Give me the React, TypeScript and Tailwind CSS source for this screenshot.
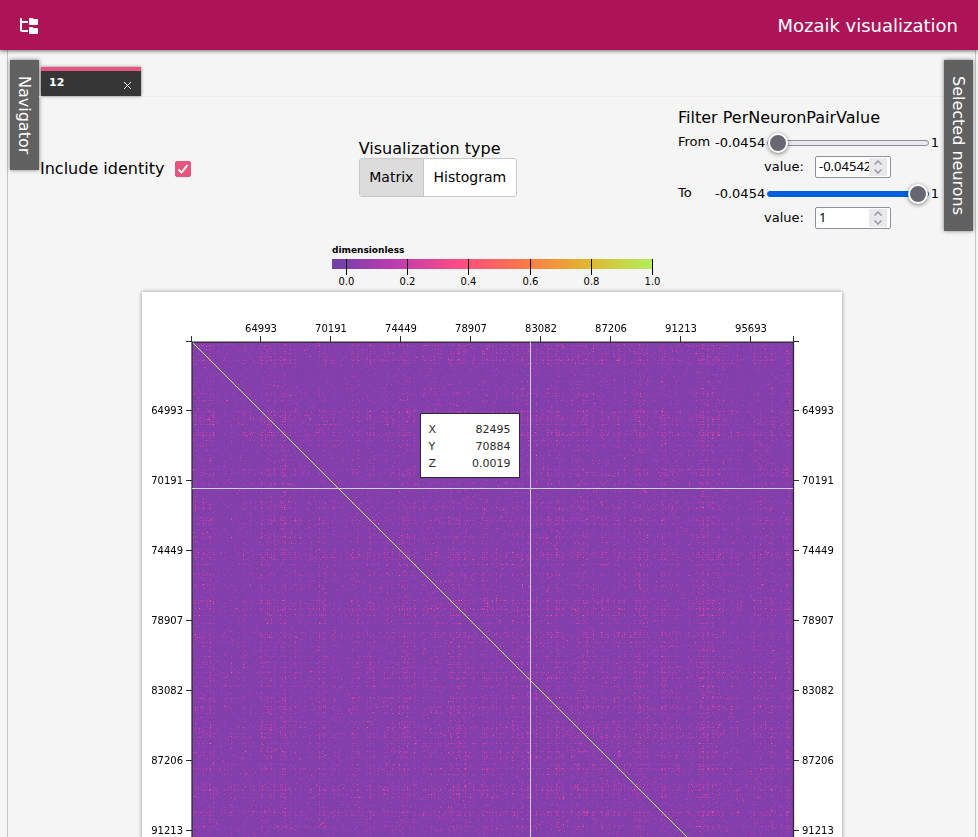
import { useEffect, useRef, useState } from "react";
import type { ChangeEvent } from "react";
import { FaFolderTree } from "react-icons/fa6";

const SIZE = 601;
const MIN = -0.0454;

const STOPS = [
  [110, 64, 170],
  [191, 60, 175],
  [254, 75, 131],
  [255, 120, 71],
  [226, 183, 47],
  [175, 240, 91],
];

function warm(t: number) {
  const p = Math.min(Math.max(t, 0), 0.9999) * 5;
  const i = Math.floor(p);
  const f = p - i;
  return STOPS[i].map((c, k) => Math.round(c + (STOPS[i + 1][k] - c) * f));
}

function generator(seed: number) {
  let a = seed;
  return () => {
    a = (a + 0x6d2b79f5) | 0;
    let t = Math.imul(a ^ (a >>> 15), 1 | a);
    t = (t + Math.imul(t ^ (t >>> 7), 61 | t)) ^ t;
    return ((t ^ (t >>> 14)) >>> 0) / 4294967296;
  };
}

function Heatmap() {
  const ref = useRef<HTMLCanvasElement>(null);

  useEffect(() => {
    const ctx = ref.current?.getContext("2d");
    if (!ctx) return;
    const rand = generator(12);
    const weights = Array.from({ length: SIZE }, () => {
      const r = rand();
      return 0.1 + r * r * r * r * 4.2;
    });
    const image = ctx.createImageData(SIZE, SIZE);
    for (let y = 0; y < SIZE; y++) {
      for (let x = 0; x < SIZE; x++) {
        const w = weights[x] * weights[y];
        let z = 0.008 + (rand() - 0.5) * 0.04;
        if (rand() < w * 0.11 + 0.008) z += 0.05 + rand() * 0.15;
        if (rand() < w * 0.007 + 0.001) z += 0.15 + rand() * 0.2;
        if (x === y) z = 1;
        const [r, g, b] = warm((z - MIN) / (1 - MIN));
        const o = (y * SIZE + x) * 4;
        image.data[o] = r;
        image.data[o + 1] = g;
        image.data[o + 2] = b;
        image.data[o + 3] = 255;
      }
    }
    ctx.putImageData(image, 0, 0);
  }, []);

  return <canvas ref={ref} width={SIZE} height={SIZE} className="block" />;
}

const TICKS = ["64993", "70191", "74449", "78907", "83082", "87206", "91213", "95693"];

function Axes() {
  return (
    <svg width="701" height="701" viewBox="0 0 701 701" className="absolute left-0 top-0 text-[10px]">
      <path d="M50 50H651M50 651H651M50 50V651M651.500 50V651" stroke="#2b2b2b" strokeWidth="1.250" />
      <g stroke="#2b2b2b" strokeWidth="1" shapeRendering="crispEdges">
        <path d="M44 49.500H50M44 651.500H50M651 49.500H657M651 651.500H657M49.500 44V50M49.500 651V657M651.500 44V50M651.500 651V657" />
        {TICKS.map((t, i) => {
          const p = 118.5 + i * 70;
          return <path key={t} d={`M${p} 44V50M${p} 651V657M44 ${p}H50M651 ${p}H657`} />;
        })}
      </g>
      <path d="M388.500 50V651M50 196.500H651" stroke="#d0d0d0" shapeRendering="crispEdges" />
      <g fill="#000">
        {TICKS.map((t, i) => {
          const p = 119 + i * 70;
          return (
            <g key={t}>
              <text x={p} y="40" textAnchor="middle">{t}</text>
              <text x="41" y={p + 3} textAnchor="end">{t}</text>
              <text x="660" y={p + 3}>{t}</text>
            </g>
          );
        })}
      </g>
    </svg>
  );
}

function ColorScale() {
  return (
    <svg width="340" height="44" viewBox="0 0 340 44" className="mt-[2px] text-[10px]" shapeRendering="crispEdges">
      <defs>
        <linearGradient id="warm">
          {STOPS.map((c, i) => (
            <stop key={i} offset={i / 5} stopColor={`rgb(${c.join(",")})`} />
          ))}
        </linearGradient>
      </defs>
      <text x="10" y="11" fontWeight="bold" className="text-[9px]">dimensionless</text>
      <rect x="10" y="17" width="320" height="10" fill="url(#warm)" />
      {["0.0", "0.2", "0.4", "0.6", "0.8", "1.0"].map((t, i) => {
        const x = Math.round(24 + i * 61.2);
        return (
          <g key={t}>
            <path d={`M${x + 0.5} 17V33`} stroke="#000" />
            <text x={x + 0.5} y="43" textAnchor="middle">{t}</text>
          </g>
        );
      })}
    </svg>
  );
}

function Tooltip() {
  const rows = [
    ["X", "82495"],
    ["Y", "70884"],
    ["Z", "0.0019"],
  ];
  return (
    <dl className="absolute left-[278px] top-[121px] w-[100px] border border-[#2b2b2b] bg-white px-2 pt-[7px] pb-[5px] text-[11px] leading-[17px] text-[#2b2b2b]">
      {rows.map(([k, v]) => (
        <div key={k} className="flex justify-between">
          <dt>{k}</dt>
          <dd>{v}</dd>
        </div>
      ))}
    </dl>
  );
}

const SLIDER =
  "h-5 w-[162px] appearance-none bg-transparent " +
  "[&::-webkit-slider-thumb]:mt-[-8px] [&::-webkit-slider-thumb]:size-5 [&::-webkit-slider-thumb]:appearance-none [&::-webkit-slider-thumb]:rounded-full [&::-webkit-slider-thumb]:border-2 [&::-webkit-slider-thumb]:border-white [&::-webkit-slider-thumb]:bg-[#676774] [&::-webkit-slider-thumb]:shadow-[0_1px_4px_#00000080] " +
  "[&::-webkit-slider-runnable-track]:h-[6px] [&::-webkit-slider-runnable-track]:rounded-full [&::-webkit-slider-runnable-track]:border ";

function RangeRow({ name, initial, filled }: { name: string; initial: string; filled?: boolean }) {
  const [value, setValue] = useState(initial);
  const change = (e: ChangeEvent<HTMLInputElement>) => setValue(e.target.value);
  const step = (d: number) => setValue((v) => String(Math.min(1, Math.max(MIN, Number(v) + d))));
  const id = name.toLowerCase();
  const track = filled
    ? "[&::-webkit-slider-runnable-track]:border-[#0060df] [&::-webkit-slider-runnable-track]:bg-[#0060df]"
    : "[&::-webkit-slider-runnable-track]:border-[#8f8f9d] [&::-webkit-slider-runnable-track]:bg-[#e9e9ed]";
  return (
    <div className="flex h-[51px] text-[13px]">
      <label htmlFor={id} className="w-[37px] leading-[24px]">{name}</label>
      <div className="flex-1">
        <div className="flex h-[26px] items-center justify-between">
          <span>-0.0454</span>
          <input id={id} type="range" min={MIN} max="1" step="any" value={value} onChange={change} className={SLIDER + track} />
          <span>1</span>
        </div>
        <div className="flex items-center pl-[49px]">
          <label htmlFor={`${id}-value`} className="w-[51px]">value:</label>
          <div className="flex h-[22px] w-[76px] items-center rounded-xs border border-[#8f8f9d] bg-white px-[3px]">
            <input
              id={`${id}-value`}
              type="text"
              inputMode="decimal"
              value={value}
              onChange={change}
              className="w-[50px] font-['Noto_Sans','Open_Sans',sans-serif] text-[13px] outline-none"
            />
            <span className="flex h-[18px] w-[18px] flex-col bg-[#e9e9ed]">
              <button type="button" aria-label={`Increase ${name}`} onClick={() => step(0.01)} className="flex h-[9px] items-center justify-center">
                <svg width="8" height="5" viewBox="0 0 8 5" fill="none" stroke="#9a9aa4" strokeWidth="1.500"><path d="M0.500 4.500 4 1l3.500 3.500" /></svg>
              </button>
              <button type="button" aria-label={`Decrease ${name}`} onClick={() => step(-0.01)} className="flex h-[9px] items-center justify-center">
                <svg width="8" height="5" viewBox="0 0 8 5" fill="none" stroke="#9a9aa4" strokeWidth="1.500"><path d="M0.500 0.500 4 4l3.500-3.500" /></svg>
              </button>
            </span>
          </div>
        </div>
      </div>
    </div>
  );
}

function Rail({ label }: { label: string }) {
  return (
    <button
      type="button"
      className="mt-[10px] w-[29px] shrink-0 self-start bg-[#616161] py-4 text-[16px] text-white shadow-[0_0_4px_#00000080]"
    >
      <span className="block leading-[29px] [writing-mode:vertical-rl]">{label}</span>
    </button>
  );
}

export default function App() {
  const [view, setView] = useState("Matrix");
  const [identity, setIdentity] = useState(true);
  return (
    <div className="flex h-screen flex-col overflow-hidden bg-[#f5f5f5] font-['DejaVu_Sans',Verdana,sans-serif] text-black">
      <header className="relative z-10 flex h-[50px] shrink-0 items-center justify-between bg-[#ad1457] px-5 text-white shadow-[0_1px_4px_#00000090]">
        <button type="button" aria-label="Toggle navigator" className="pt-[2px]">
          <FaFolderTree className="h-4 w-[18px]" />
        </button>
        <h1 className="text-[18px]">Mozaik visualization</h1>
      </header>

      <div className="ml-[7px] mr-[2px] flex min-h-0 flex-1 border-x border-[#c4c4c4] px-[2px]">
        <Rail label="Navigator" />
        <main className="min-w-0 flex-1 pt-[17px]">
          <nav className="flex border-b border-[#eeeeee] pl-[2px]">
            <div className="flex h-[29px] w-[100px] items-center justify-between border-t-4 border-[#e75480] bg-[#363636] px-2 text-[11px] text-white shadow-[0_0_3px_#00000080]">
              <button type="button" className="font-bold">12</button>
              <button type="button" aria-label="Close tab" className="pt-1 pr-px">
                <svg width="9" height="9" viewBox="0 0 9 9" stroke="currentColor"><path d="M1 1l7 7M8 1l-7 7" /></svg>
              </button>
            </div>
          </nav>

          <section className="flex h-[143px] items-center justify-between pl-[1px] pr-[5px]">
            <label className="flex items-center gap-[11px] text-[16px]">
              Include identity
              <span className="grid size-4">
                <input
                  type="checkbox"
                  checked={identity}
                  onChange={(e) => setIdentity(e.target.checked)}
                  className="col-start-1 row-start-1 size-4 appearance-none rounded-xs border border-[#e75480] bg-white checked:bg-[#e75480]"
                />
                {identity && (
                  <svg viewBox="0 0 16 16" className="pointer-events-none col-start-1 row-start-1 size-4" fill="none" stroke="#fff" strokeWidth="2">
                    <path d="M3.500 8.500l3 3 6-7.500" />
                  </svg>
                )}
              </span>
            </label>

            <fieldset className="pl-[6px]">
              <legend className="text-[16px] leading-[18px]">Visualization type</legend>
              <div className="flex h-[39px] w-[158px] overflow-hidden rounded-[3px] border border-[#c8c8c8] text-[14px]">
                {["Matrix", "Histogram"].map((name) => (
                  <button
                    key={name}
                    type="button"
                    aria-pressed={view === name}
                    onClick={() => setView(name)}
                    className="grow border-[#c8c8c8] bg-white not-first:border-l aria-pressed:bg-[#dcdcdc]"
                  >
                    {name}
                  </button>
                ))}
              </div>
            </fieldset>

            <fieldset className="w-[261px]">
              <legend className="text-[16px] leading-[24px]">Filter PerNeuronPairValue</legend>
              <RangeRow name="From" initial="-0.04542" />
              <RangeRow name="To" initial="1" filled />
            </fieldset>
          </section>

          <div className="flex flex-col items-center">
            <ColorScale />
            <div className="relative mt-[6px] w-[700px] bg-white p-[50px] shadow-[0_0_4px_#00000070]">
              <Heatmap />
              <Axes />
              <Tooltip />
            </div>
          </div>
        </main>
        <Rail label="Selected neurons" />
      </div>
    </div>
  );
}
